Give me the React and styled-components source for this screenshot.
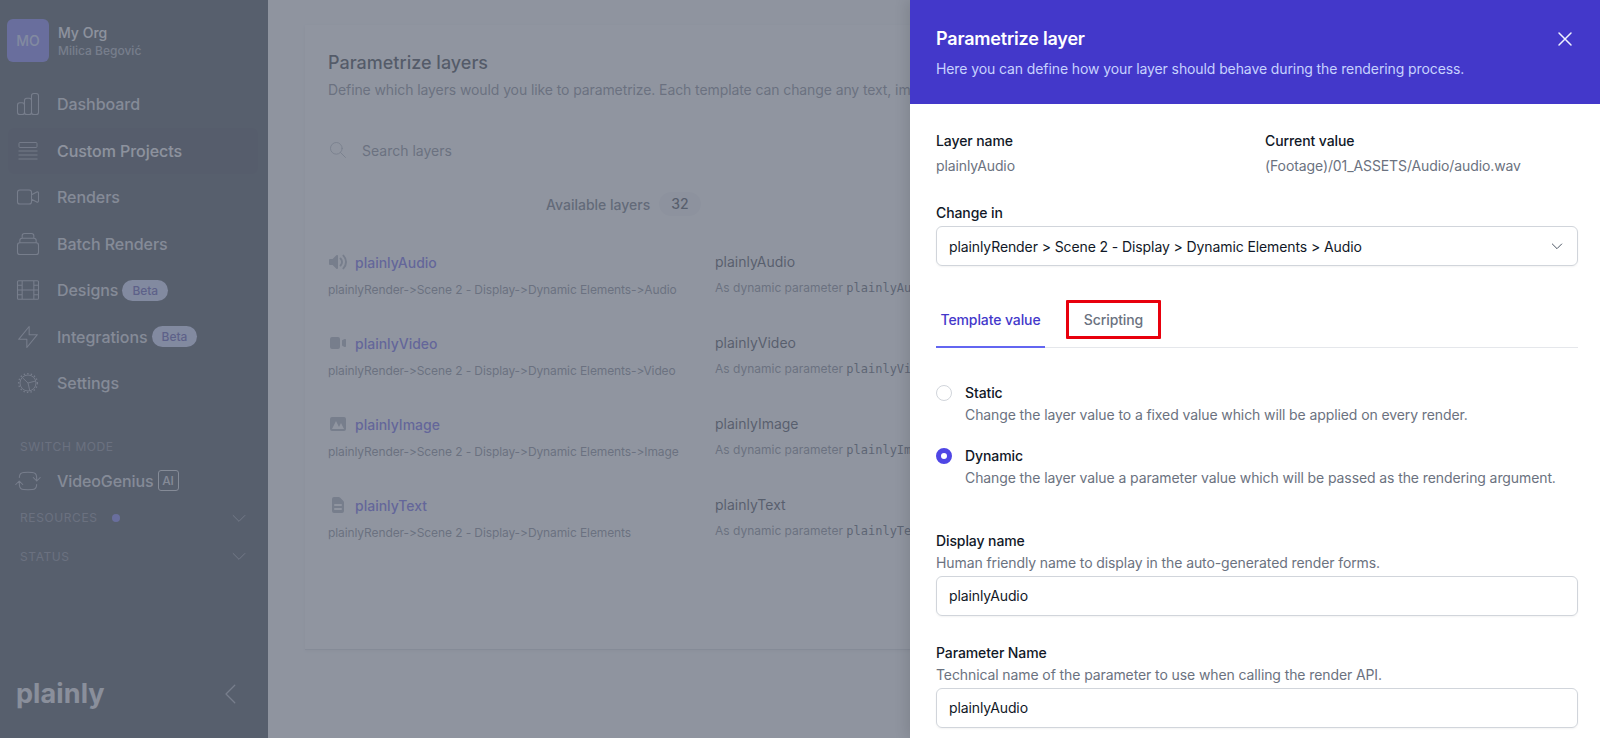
import React from "react";
import styled, { createGlobalStyle } from "styled-components";
import {
  HiOutlineChartBar,
  HiOutlineVideoCamera,
  HiOutlineCollection,
  HiOutlineFilm,
  HiOutlineLightningBolt,
  HiOutlineSearch,
  HiOutlineX,
  HiOutlineChevronDown,
  HiOutlineChevronLeft,
  HiVolumeUp,
  HiVideoCamera,
  HiPhotograph,
  HiDocumentText,
} from "react-icons/hi";
import { HiOutlineArrowPathRoundedSquare } from "react-icons/hi2";

const GlobalStyle = createGlobalStyle`
  html, body {
    margin: 0;
    height: 738px;
    overflow: hidden;
    font-family: "Inter", "Liberation Sans", sans-serif;
    font-variant-ligatures: none;
    font-feature-settings: "calt" 0;
  }
  * { box-sizing: border-box; }
`;

const ListIcon = () => (
  <svg viewBox="-3 -3 28 28" fill="none" stroke="currentColor">
    <rect x="2" y="2.5" width="18" height="5" rx="1" />
    <path d="M1.5 11h19M1.5 15h19M1.5 19h19" />
  </svg>
);

const GearIcon = () => (
  <svg viewBox="-3 -3 28 28" fill="none" stroke="currentColor">
    <circle cx="11" cy="11" r="8" />
    <circle cx="11" cy="11" r="9.4" style={{ strokeWidth: 1.3 }} strokeDasharray="1.4 2.2" />
    <path d="M11 11 5.4 5.6M11 11l7.6-2M11 11l1.8 7.8" />
  </svg>
);

const NAV = [
  { label: "Dashboard", icon: <HiOutlineChartBar /> },
  { label: "Custom Projects", icon: <ListIcon />, active: true },
  { label: "Renders", icon: <HiOutlineVideoCamera /> },
  { label: "Batch Renders", icon: <HiOutlineCollection /> },
  { label: "Designs", icon: <HiOutlineFilm />, beta: true },
  { label: "Integrations", icon: <HiOutlineLightningBolt />, beta: true },
  { label: "Settings", icon: <GearIcon /> },
];

const LAYERS = [
  { name: "plainlyAudio", path: "plainlyRender->Scene 2 - Display->Dynamic Elements->Audio", icon: <HiVolumeUp /> },
  { name: "plainlyVideo", path: "plainlyRender->Scene 2 - Display->Dynamic Elements->Video", icon: <HiVideoCamera /> },
  { name: "plainlyImage", path: "plainlyRender->Scene 2 - Display->Dynamic Elements->Image", icon: <HiPhotograph /> },
  { name: "plainlyText", path: "plainlyRender->Scene 2 - Display->Dynamic Elements", icon: <HiDocumentText /> },
];

const App = () => {
  return (
    <Page>
      <GlobalStyle />
      <Sidebar>
        <OrgRow>
          <Avatar>MO</Avatar>
          <div>
            <OrgName>My Org</OrgName>
            <UserName>Milica Begović</UserName>
          </div>
        </OrgRow>
        <Nav>
          {NAV.map((item) => (
            <NavItem key={item.label} $active={item.active}>
              <NavIcon>{item.icon}</NavIcon>
              {item.label}
              {item.beta && <BetaPill>Beta</BetaPill>}
            </NavItem>
          ))}
        </Nav>
        <SectionLabel>SWITCH MODE</SectionLabel>
        <ModeItem>
          <NavIcon>
            <HiOutlineArrowPathRoundedSquare />
          </NavIcon>
          VideoGenius
          <AiBox>AI</AiBox>
        </ModeItem>
        <CollapseRow>
          <CollapseLabel>
            RESOURCES
            <Dot />
          </CollapseLabel>
          <HiOutlineChevronDown />
        </CollapseRow>
        <CollapseRow>
          <CollapseLabel>STATUS</CollapseLabel>
          <HiOutlineChevronDown />
        </CollapseRow>
        <SidebarFooter>
          <Logo>plainly</Logo>
          <HiOutlineChevronLeft />
        </SidebarFooter>
      </Sidebar>

      <Main>
        <Card>
          <CardTitle>Parametrize layers</CardTitle>
          <CardDesc>
            Define which layers would you like to parametrize. Each template can change any text, image, video or audio
            layer of your composition.
          </CardDesc>
          <SearchRow>
            <HiOutlineSearch />
            Search layers
          </SearchRow>
          <Available>
            Available layers
            <CountBadge>32</CountBadge>
          </Available>
          {LAYERS.map((layer) => (
            <LayerRow key={layer.name}>
              <div>
                <LayerName>
                  {layer.icon}
                  {layer.name}
                </LayerName>
                <LayerPath>{layer.path}</LayerPath>
              </div>
              <div>
                <ParamName>{layer.name}</ParamName>
                <ParamDesc>
                  As dynamic parameter <code>{layer.name}</code>
                </ParamDesc>
              </div>
            </LayerRow>
          ))}
        </Card>
      </Main>

      <Backdrop />

      <Drawer>
        <DrawerHeader>
          <DrawerTitle>Parametrize layer</DrawerTitle>
          <DrawerSub>Here you can define how your layer should behave during the rendering process.</DrawerSub>
          <CloseButton>
            <HiOutlineX />
          </CloseButton>
        </DrawerHeader>
        <DrawerBody>
          <InfoGrid>
            <div>
              <FieldLabel>Layer name</FieldLabel>
              <InfoValue>plainlyAudio</InfoValue>
            </div>
            <div>
              <FieldLabel>Current value</FieldLabel>
              <InfoValue>(Footage)/01_ASSETS/Audio/audio.wav</InfoValue>
            </div>
          </InfoGrid>
          <SelectLabel>Change in</SelectLabel>
          <SelectBox>
            plainlyRender &gt; Scene 2 - Display &gt; Dynamic Elements &gt; Audio
            <HiOutlineChevronDown />
          </SelectBox>
          <Tabs>
            <Tab $active>Template value</Tab>
            <Tab $marked>Scripting</Tab>
          </Tabs>
          <RadioRow>
            <Radio />
            <div>
              <FieldLabel>Static</FieldLabel>
              <RadioDesc>Change the layer value to a fixed value which will be applied on every render.</RadioDesc>
            </div>
          </RadioRow>
          <RadioRow $second>
            <Radio $checked />
            <div>
              <FieldLabel>Dynamic</FieldLabel>
              <RadioDesc>Change the layer value a parameter value which will be passed as the rendering argument.</RadioDesc>
            </div>
          </RadioRow>
          <Field $first>
            <FieldLabel>Display name</FieldLabel>
            <FieldHelp>Human friendly name to display in the auto-generated render forms.</FieldHelp>
            <TextBox>plainlyAudio</TextBox>
          </Field>
          <Field>
            <FieldLabel>Parameter Name</FieldLabel>
            <FieldHelp>Technical name of the parameter to use when calling the render API.</FieldHelp>
            <TextBox>plainlyAudio</TextBox>
          </Field>
        </DrawerBody>
      </Drawer>
    </Page>
  );
};

export default App;

const Page = styled.div`
  position: relative;
  display: flex;
  width: 1600px;
  height: 738px;
  overflow: hidden;
  background: #f9fafb;
`;

const Sidebar = styled.aside`
  flex: 0 0 268px;
  display: flex;
  flex-direction: column;
  height: 738px;
  background: #1f2937;
  color: #e5e7eb;
  padding: 19px 0 0 0;
`;

const OrgRow = styled.div`
  display: flex;
  align-items: center;
  gap: 9px;
  padding-left: 7px;
`;

const Avatar = styled.div`
  width: 42px;
  height: 43px;
  border-radius: 6px;
  background: #6366f1;
  color: #c7d2fe;
  display: flex;
  align-items: center;
  justify-content: center;
  font-size: 14px;
  font-weight: 500;
`;

const OrgName = styled.div`
  font-size: 14px;
  font-weight: 500;
  line-height: 20px;
  color: #f3f4f6;
`;

const UserName = styled.div`
  font-size: 12px;
  line-height: 16px;
  font-weight: 500;
  color: #9ca3af;
`;

const Nav = styled.nav`
  display: flex;
  flex-direction: column;
  margin-top: 19px;
  padding: 0 10px 0 8px;
`;

const NavItem = styled.div`
  display: flex;
  align-items: center;
  height: 46.5px;
  padding-left: 8px;
  font-size: 16px;
  font-weight: 500;
  letter-spacing: -0.05px;
  color: ${(p) => (p.$active ? "#f3f4f6" : "#d1d5db")};
  background: ${(p) => (p.$active ? "#1a2330" : "transparent")};
  border-radius: 6px;
`;

const NavIcon = styled.span`
  flex: 0 0 41px;
  display: flex;
  align-items: center;
  color: #9ca3af;
  svg {
    flex-shrink: 0;
    width: 28px;
    height: 28px;
    margin-left: -2px;
    stroke-width: 0.9;
  }
`;

const BetaPill = styled.span`
  margin-left: 4px;
  padding: 0 10px;
  height: 21px;
  line-height: 21px;
  border-radius: 11px;
  background: #c7d2fe;
  color: #3730a3;
  font-size: 12px;
  font-weight: 500;
`;

const SectionLabel = styled.div`
  margin-top: 32px;
  padding-left: 20px;
  font-size: 12px;
  line-height: 16px;
  letter-spacing: 0.6px;
  color: #6b7280;
`;

const ModeItem = styled.div`
  display: flex;
  align-items: center;
  height: 36px;
  margin-top: 8px;
  padding-left: 16px;
  font-size: 16px;
  font-weight: 500;
  letter-spacing: -0.1px;
  color: #d1d5db;
`;

const AiBox = styled.span`
  margin-left: 4px;
  width: 21px;
  height: 21px;
  border: 1px solid #d1d5db;
  border-radius: 3px;
  font-size: 12px;
  display: flex;
  align-items: center;
  justify-content: center;
`;

const CollapseRow = styled.div`
  display: flex;
  align-items: center;
  justify-content: space-between;
  height: 38.5px;
  padding: 0 19px 0 20px;
  color: #9ca3af;
  svg {
    width: 20px;
    height: 20px;
    stroke-width: 1;
  }
`;

const CollapseLabel = styled.div`
  display: flex;
  align-items: center;
  gap: 14px;
  font-size: 12px;
  letter-spacing: 0.6px;
  color: #6b7280;
`;

const Dot = styled.span`
  width: 8px;
  height: 8px;
  border-radius: 50%;
  background: #6366f1;
`;

const SidebarFooter = styled.div`
  margin-top: auto;
  margin-bottom: 26px;
  display: flex;
  align-items: center;
  justify-content: space-between;
  padding: 0 22px 0 16px;
  color: #9ca3af;
  svg {
    width: 30px;
    height: 30px;
    stroke-width: 1;
  }
`;

const Logo = styled.div`
  font-size: 27px;
  font-weight: 700;
  line-height: 36px;
  letter-spacing: 0.1px;
  color: #e5e7eb;
`;

const Main = styled.main`
  flex: 1;
  padding: 25px 24px 88px 37px;
`;

const Card = styled.section`
  height: 100%;
  padding: 26px 23px;
  background: #fff;
  border-bottom: 1px solid #d1d5db;
  box-shadow: 0 1px 3px rgba(0, 0, 0, 0.08);
`;

const CardTitle = styled.h2`
  margin: 0;
  font-size: 18px;
  line-height: 24px;
  font-weight: 500;
  color: #111827;
`;

const CardDesc = styled.p`
  margin: 5px 0 0;
  font-size: 14px;
  line-height: 20px;
  letter-spacing: -0.1px;
  color: #6b7280;
  white-space: nowrap;
`;

const SearchRow = styled.div`
  display: flex;
  align-items: center;
  gap: 14px;
  margin-top: 38px;
  height: 24px;
  font-size: 14px;
  color: #6b7280;
  svg {
    width: 20px;
    height: 20px;
    stroke-width: 1;
    color: #9ca3af;
  }
`;

const Available = styled.div`
  display: flex;
  align-items: center;
  margin: 29px 0 18px 218px;
  height: 26px;
  font-size: 14px;
  font-weight: 500;
  color: #4b5563;
`;

const CountBadge = styled.span`
  margin-left: 9px;
  padding: 0 12px;
  line-height: 24px;
  border-radius: 12px;
  background: #f3f4f6;
  color: #1f2937;
`;

const LayerRow = styled.div`
  display: grid;
  grid-template-columns: 387px 1fr;
  height: 81px;
  white-space: nowrap;
`;

const LayerName = styled.div`
  display: flex;
  align-items: center;
  gap: 7px;
  margin-top: 15px;
  height: 24px;
  font-size: 14px;
  font-weight: 500;
  color: #4f46e5;
  svg {
    width: 20px;
    height: 20px;
    color: #9ca3af;
  }
`;

const LayerPath = styled.div`
  margin-top: 8px;
  font-size: 12px;
  line-height: 16px;
  letter-spacing: -0.1px;
  color: #6b7280;
`;

const ParamName = styled.div`
  margin-top: 15px;
  height: 24px;
  line-height: 24px;
  font-size: 14px;
  color: #1f2937;
`;

const ParamDesc = styled.div`
  margin-top: 6px;
  font-size: 12px;
  line-height: 16px;
  color: #6b7280;
  code {
    font-family: "DejaVu Sans Mono", monospace;
    font-size: 12px;
    color: #374151;
  }
`;

// dims everything behind the drawer
const Backdrop = styled.div`
  position: absolute;
  inset: 0;
  background: rgba(107, 114, 128, 0.75);
`;

const Drawer = styled.div`
  position: absolute;
  top: 0;
  right: 0;
  bottom: 0;
  width: 690px;
  overflow: hidden;
  background: #fff;
  box-shadow: -4px 0 12px rgba(0, 0, 0, 0.1);
  letter-spacing: -0.1px;
`;

const DrawerHeader = styled.header`
  position: relative;
  height: 104px;
  padding: 27px 26px 0;
  background: #4338ca;
`;

const DrawerTitle = styled.h3`
  margin: 0;
  font-size: 18px;
  line-height: 24px;
  font-weight: 600;
  letter-spacing: -0.2px;
  color: #fff;
`;

const DrawerSub = styled.p`
  margin: 8px 0 0;
  font-size: 14px;
  line-height: 20px;
  color: #c7d2fe;
`;

const CloseButton = styled.span`
  position: absolute;
  top: 27px;
  right: 23px;
  color: #eef2ff;
  svg {
    display: block;
    width: 24px;
    height: 24px;
    stroke-width: 1.5;
  }
`;

const DrawerBody = styled.div`
  padding: 27px 22px 0 26px;
`;

const InfoGrid = styled.div`
  display: grid;
  grid-template-columns: 329px 1fr;
`;

const FieldLabel = styled.div`
  font-size: 14px;
  line-height: 20px;
  font-weight: 500;
  color: #111827;
`;

const InfoValue = styled.div`
  margin-top: 5px;
  font-size: 14px;
  line-height: 20px;
  color: #6b7280;
`;

const SelectLabel = styled(FieldLabel)`
  margin-top: 27px;
`;

const SelectBox = styled.div`
  display: flex;
  align-items: center;
  justify-content: space-between;
  height: 40px;
  margin-top: 3px;
  padding: 0 12px;
  border: 1px solid #d1d5db;
  border-radius: 6px;
  box-shadow: 0 1px 2px rgba(0, 0, 0, 0.05);
  font-size: 14px;
  color: #111827;
  svg {
    width: 16px;
    height: 16px;
    stroke-width: 1.5;
    color: #4b5563;
  }
`;

const Tabs = styled.div`
  display: flex;
  gap: 21px;
  margin-top: 27px;
  border-bottom: 1px solid #e5e7eb;
`;

const Tab = styled.div`
  position: relative;
  width: ${(p) => (p.$active ? "109px" : "95px")};
  height: 55px;
  padding-top: 17px;
  line-height: 20px;
  margin-bottom: -1px;
  text-align: center;
  font-size: 14px;
  font-weight: 500;
  color: ${(p) => (p.$active ? "#4338ca" : "#6b7280")};
  border-bottom: 2px solid ${(p) => (p.$active ? "#6366f1" : "transparent")};
  ${(p) =>
    p.$marked &&
    `
    &::after {
      content: "";
      position: absolute;
      inset: 7px 0 7px 0;
      border: 3px solid #e8000d;
      border-radius: 1px;
    }
  `}
`;

const RadioRow = styled.div`
  display: flex;
  gap: 13px;
  margin-top: ${(p) => (p.$second ? "21px" : "35px")};
`;

const Radio = styled.span`
  flex: 0 0 16px;
  height: 16px;
  margin-top: 2px;
  border-radius: 50%;
  border: ${(p) => (p.$checked ? "5px solid #4f46e5" : "1px solid #d1d5db")};
  background: #fff;
`;

const RadioDesc = styled.div`
  margin-top: 2px;
  font-size: 14px;
  line-height: 20px;
  color: #6b7280;
`;

const Field = styled.div`
  margin-top: ${(p) => (p.$first ? "43px" : "27px")};
`;

const FieldHelp = styled.div`
  font-size: 14px;
  line-height: 20px;
  margin-top: 2px;
  color: #6b7280;
`;

const TextBox = styled.div`
  height: 40px;
  margin-top: 3px;
  padding: 0 12px;
  line-height: 38px;
  border: 1px solid #d1d5db;
  border-radius: 6px;
  box-shadow: 0 1px 2px rgba(0, 0, 0, 0.05);
  font-size: 14px;
  color: #111827;
`;
